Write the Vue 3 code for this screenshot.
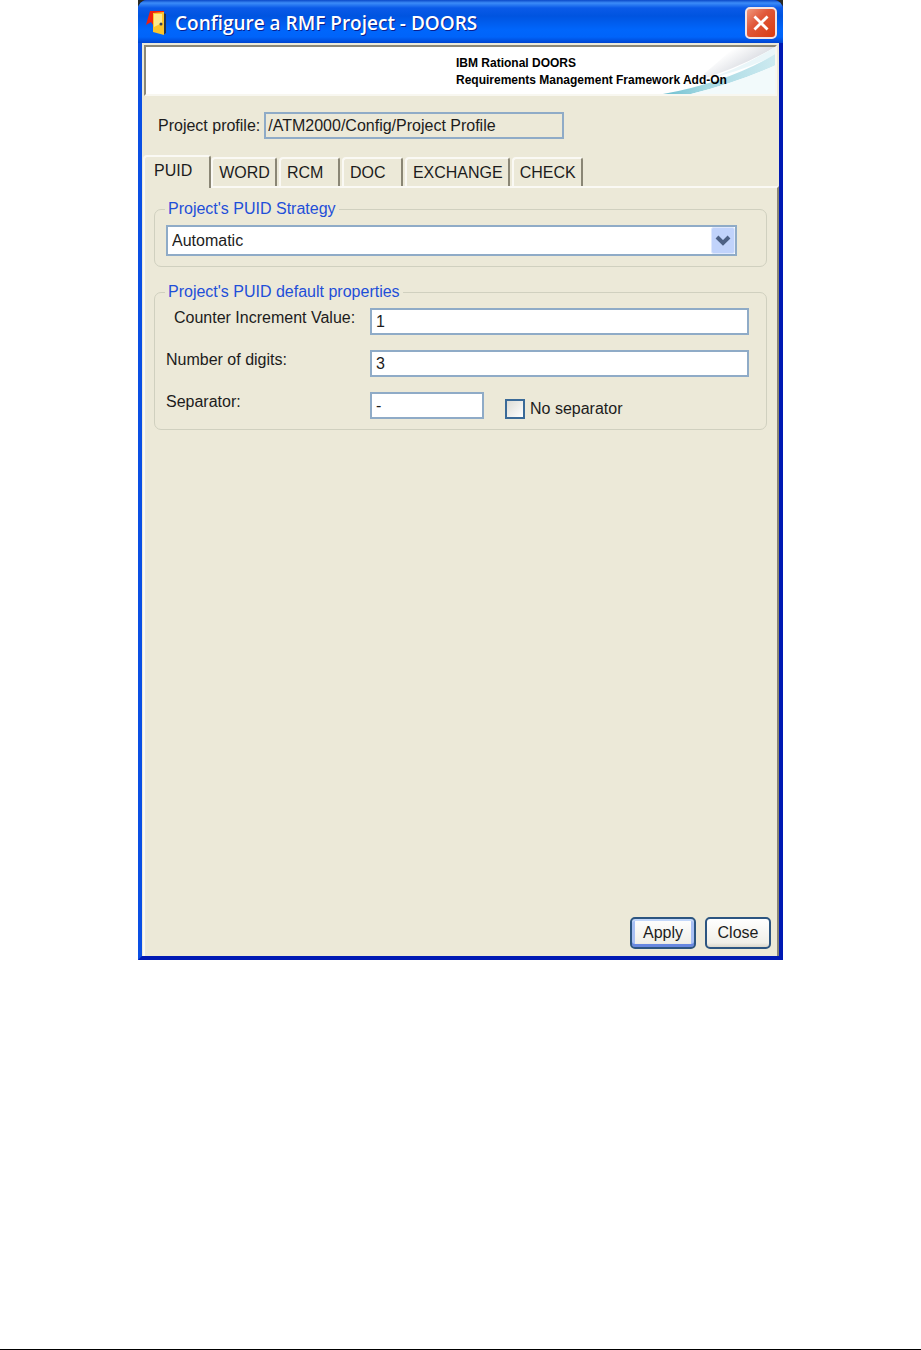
<template>
  <div class="page">
    <div class="backdrop">
      <main class="dialog">
        <header class="titlebar">
          <svg class="titlebar__icon" viewBox="0 0 22 26">
            <path d="M17 3L20 4V23L17 25Z" fill="#26324a" />
            <path d="M4 1H18V4H9V13L7 15L5 12L0 15Z" fill="#ee2010" />
            <path d="M7 3L18 2V25L7 22Z" fill="#fcc62c" />
            <path d="M8 4L16 4V13L8 17Z" fill="#fde98c" />
            <circle cx="15" cy="14" r="1.5" fill="#33415c" />
          </svg>
          <h1 class="titlebar__text">Configure a RMF Project - DOORS</h1>
          <button class="titlebar__close" type="button" aria-label="Close window">
            <svg viewBox="0 0 30 30">
              <path d="M8 8L22 22M22 8L8 22" stroke="#fff" stroke-width="3" />
            </svg>
          </button>
        </header>

        <div class="client">
          <div class="banner">
            <svg class="banner__art" viewBox="0 0 130 46" preserveAspectRatio="none">
              <defs>
                <linearGradient id="grey" gradientUnits="userSpaceOnUse" x1="84" y1="4" x2="94" y2="21">
                  <stop offset="0" stop-color="#ffffff" />
                  <stop offset="100%" stop-color="#dfe1e6" />
                </linearGradient>
                <linearGradient id="teal" x1="0" y1="0" x2="1" y2="0">
                  <stop offset="0" stop-color="#6fc0d0" />
                  <stop offset="40%" stop-color="#a6d9e3" />
                  <stop offset="100%" stop-color="#cdeaf0" />
                </linearGradient>
              </defs>
              <path d="M90 0H130Q98 19 50 34Z" fill="url(#grey)" />
              <path d="M130 0Q94 22 60 32Q96 24 130 8Z" fill="#eaf6f9" />
              <path d="M130 7Q84 34 18 46H46Q94 34 130 18Z" fill="url(#teal)" />
              <path d="M130 18Q94 34 46 46H130Z" fill="#f2fafb" />
            </svg>
            <p class="banner__text">
              IBM Rational DOORS<br />
              Requirements Management Framework Add-On
            </p>
          </div>

          <div class="profile">
            <label for="profile">Project profile:</label>
            <input id="profile" class="field field--readonly" type="text" :value="profile" readonly />
          </div>

          <div class="tabs" role="tablist">
            <button
              v-for="tab in tabs"
              :key="tab"
              class="tab"
              :class="{ 'tab--active': tab === activeTab }"
              type="button"
              role="tab"
              :aria-selected="tab === activeTab"
              @click="activeTab = tab"
            >
              {{ tab }}
            </button>
          </div>

          <section class="panel">
            <fieldset class="group">
              <legend>Project's PUID Strategy</legend>
              <div class="combo">
                <select v-model="strategy" class="combo__select" aria-label="Project's PUID Strategy">
                  <option>Automatic</option>
                  <option>Manual</option>
                </select>
                <svg class="combo__arrow" viewBox="0 0 24 27">
                  <rect width="23" height="26" x="0.5" y="0.5" rx="2" fill="#c1d3fb" stroke="#dfe8fd" />
                  <path d="M6 10L12 16L18 10" fill="none" stroke="#4d6185" stroke-width="4" />
                </svg>
              </div>
            </fieldset>

            <fieldset class="group">
              <legend>Project's PUID default properties</legend>
              <div class="form">
                <label class="form__label form__label--indent" for="increment">Counter Increment Value:</label>
                <input id="increment" v-model="increment" class="field" type="text" />
                <label class="form__label" for="digits">Number of digits:</label>
                <input id="digits" v-model="digits" class="field" type="text" />
                <label class="form__label" for="separator">Separator:</label>
                <div class="form__separator">
                  <input id="separator" v-model="separator" class="field field--short" type="text" />
                  <label class="check">
                    <input v-model="noSeparator" class="check__box" type="checkbox" />
                    No separator
                  </label>
                </div>
              </div>
            </fieldset>

            <footer class="actions">
              <button class="btn btn--default" type="button">Apply</button>
              <button class="btn" type="button">Close</button>
            </footer>
          </section>
        </div>
      </main>
    </div>
  </div>
</template>

<script setup>
import { ref } from "vue";

const tabs = ["PUID", "WORD", "RCM", "DOC", "EXCHANGE", "CHECK"];
const activeTab = ref("PUID");

const profile = "/ATM2000/Config/Project Profile";
const strategy = ref("Automatic");
const increment = ref("1");
const digits = ref("3");
const separator = ref("-");
const noSeparator = ref(false);
</script>

<style>
body {
  background: #fff;
}
</style>

<style scoped>
* {
  box-sizing: border-box;
}

.page {
  min-height: 100vh;
  padding: 0 138px 389px;
  border-bottom: 1px solid #000;
  font-family: "Liberation Sans", Arial, sans-serif;
  font-size: 16px;
  line-height: 20px;
  color: #1c1c1c;
}

.backdrop {
  background: linear-gradient(#2b2a22 20px, #fff 20px);
}

.dialog {
  display: flex;
  flex-direction: column;
  min-height: calc(100vh - 390px);
  border: 4px solid #0a4fe4;
  border-top: 0;
  border-right-color: #0019b4;
  border-bottom-color: #0019b4;
  border-radius: 9px 9px 0 0;
  background: #0a4fe4;
}

.titlebar {
  display: flex;
  align-items: center;
  height: 43px;
  margin: 0 -4px;
  padding: 3px 6px 0 8px;
  border-radius: 9px 9px 0 0;
  background: linear-gradient(#0a48c8 0, #3c8cf8 3px, #0a5ae8 8px, #0054e0 16px, #0066fc 30px, #0064fa 37px, #0044d0 43px);
}

.titlebar__icon {
  width: 22px;
  height: 26px;
}

.titlebar__text {
  flex: 1;
  margin: 0 0 0 7px;
  font-family: "Trebuchet MS", "Open Sans", sans-serif;
  font-size: 19px;
  font-weight: 600;
  line-height: 26px;
  color: #fff;
  text-shadow: 1px 1px #0a1e8c;
}

.titlebar__close {
  width: 32px;
  height: 32px;
  padding: 0;
  border: 2px solid #f4e4e4;
  border-radius: 5px;
  background: linear-gradient(135deg, #f0987c, #e0583a 40%, #d83c10);
}

.titlebar__close svg {
  display: block;
  width: 28px;
  height: 28px;
}

.client {
  flex: 1;
  display: flex;
  flex-direction: column;
  padding-left: 1px;
  background: #ece9d8;
}

.banner {
  position: relative;
  height: 51px;
  margin: 2px 2px 0 1px;
  padding-top: 8px;
  border: 2px solid #8c8878;
  border-right-color: #f8f7f0;
  border-bottom-color: #f8f7f0;
  background: #fff;
}

.banner__art {
  position: absolute;
  top: 0;
  right: 0;
  width: 130px;
  height: 47px;
}

.banner__text {
  position: relative;
  width: 272px;
  margin: 0 47px 0 auto;
  font-size: 12px;
  font-weight: 700;
  line-height: 17px;
  color: #000;
  white-space: nowrap;
}

.profile {
  display: flex;
  align-items: center;
  gap: 4px;
  padding: 16px 15px;
}

.field {
  width: 100%;
  height: 27px;
  padding: 0 4px;
  border: 2px solid #8fabc7;
  border-radius: 0;
  background: #fff;
  font: inherit;
  color: inherit;
}

.field--readonly {
  width: 300px;
  padding: 0 2px;
  background: #ece9d8;
}

.field--short {
  width: 114px;
}

.tabs {
  display: flex;
  align-items: flex-end;
  gap: 2px;
}

.tab {
  height: 29px;
  min-width: 61px;
  padding: 0 5px 0 6px;
  border: 2px solid #faf9f4;
  border-right-color: #8a8675;
  border-bottom: 0;
  border-radius: 4px 3px 0 0;
  background: #ece9d8;
  font: inherit;
  color: inherit;
  text-align: left;
}

.tab--active {
  position: relative;
  z-index: 1;
  height: 33px;
  margin: 0 -2px -2px 0;
  padding: 0 17px 4px 9px;
}

.panel {
  flex: 1;
  display: flex;
  flex-direction: column;
  gap: 15px;
  padding: 11px 10px 7px 9px;
  border: 2px solid #faf9f4;
  border-right-color: #8a8675;
  border-bottom: 0;
}

.group {
  min-width: 0;
  margin: 0;
  padding: 6px 17px 10px 11px;
  border: 1px solid #d0d0bf;
  border-radius: 7px;
}

.group legend {
  margin-left: -1px;
  padding: 0 3px;
  color: #1f4fd8;
}

.combo {
  position: relative;
  margin-right: 12px;
}

.combo__select {
  display: block;
  width: 100%;
  height: 31px;
  padding: 0 28px 0 4px;
  border: 2px solid #8fabc7;
  border-radius: 0;
  appearance: none;
  background: #fff;
  font: inherit;
  color: inherit;
}

.combo__arrow {
  position: absolute;
  top: 2px;
  right: 2px;
  width: 24px;
  height: 27px;
  pointer-events: none;
}

.form {
  display: grid;
  grid-template-columns: 204px 1fr;
  row-gap: 15px;
}

.form__label--indent {
  padding-left: 8px;
}

.form__separator {
  display: flex;
  align-items: flex-end;
  gap: 21px;
}

.check {
  display: flex;
  align-items: center;
  gap: 5px;
}

.check__box {
  width: 20px;
  height: 20px;
  margin: 0;
  border: 2px solid #3a6a98;
  appearance: none;
  background: linear-gradient(135deg, #dcdcd6, #fff);
}

.check__box:checked {
  background: #21a121;
}

.actions {
  display: flex;
  justify-content: flex-end;
  gap: 9px;
  margin: auto -4px 0 0;
}

.btn {
  width: 66px;
  height: 32px;
  padding: 0;
  border: 2px solid #2c5580;
  border-radius: 5px;
  background: linear-gradient(#fff, #f0efe8 85%, #dcd8cc);
  font: inherit;
  color: inherit;
}

.btn--default {
  box-shadow: inset 0 2px #c4d8fa, inset 0 -3px #6888e0, inset 3px 0 #a8c0f4, inset -3px 0 #a8c0f4;
}
</style>
